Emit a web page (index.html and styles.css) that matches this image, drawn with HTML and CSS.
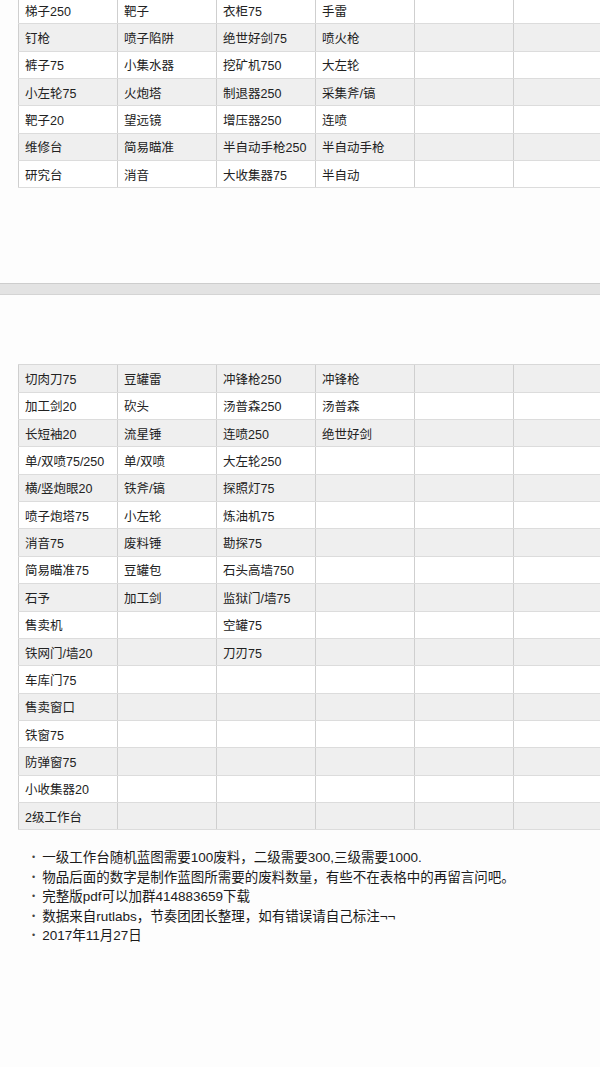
FILE: index.html
```html
<!DOCTYPE html>
<html lang="zh-CN">
<head>
<meta charset="utf-8">
<title>蓝图表</title>
<link rel="stylesheet" href="styles.css">
</head>
<body>
<div class="page">
  <section class="sheet sheet-top">
    <div class="row"><div class="cell">梯子250</div><div class="cell">靶子</div><div class="cell">衣柜75</div><div class="cell">手雷</div><div class="cell"></div><div class="cell"></div></div>
    <div class="row alt"><div class="cell">钉枪</div><div class="cell">喷子陷阱</div><div class="cell">绝世好剑75</div><div class="cell">喷火枪</div><div class="cell"></div><div class="cell"></div></div>
    <div class="row"><div class="cell">裤子75</div><div class="cell">小集水器</div><div class="cell">挖矿机750</div><div class="cell">大左轮</div><div class="cell"></div><div class="cell"></div></div>
    <div class="row alt"><div class="cell">小左轮75</div><div class="cell">火炮塔</div><div class="cell">制退器250</div><div class="cell">采集斧/镐</div><div class="cell"></div><div class="cell"></div></div>
    <div class="row"><div class="cell">靶子20</div><div class="cell">望远镜</div><div class="cell">增压器250</div><div class="cell">连喷</div><div class="cell"></div><div class="cell"></div></div>
    <div class="row alt"><div class="cell">维修台</div><div class="cell">简易瞄准</div><div class="cell">半自动手枪250</div><div class="cell">半自动手枪</div><div class="cell"></div><div class="cell"></div></div>
    <div class="row"><div class="cell">研究台</div><div class="cell">消音</div><div class="cell">大收集器75</div><div class="cell">半自动</div><div class="cell"></div><div class="cell"></div></div>
  </section>

  <div class="divider"></div>

  <section class="sheet sheet-bottom">
    <div class="row alt"><div class="cell">切肉刀75</div><div class="cell">豆罐雷</div><div class="cell">冲锋枪250</div><div class="cell">冲锋枪</div><div class="cell"></div><div class="cell"></div></div>
    <div class="row"><div class="cell">加工剑20</div><div class="cell">砍头</div><div class="cell">汤普森250</div><div class="cell">汤普森</div><div class="cell"></div><div class="cell"></div></div>
    <div class="row alt"><div class="cell">长短袖20</div><div class="cell">流星锤</div><div class="cell">连喷250</div><div class="cell">绝世好剑</div><div class="cell"></div><div class="cell"></div></div>
    <div class="row"><div class="cell">单/双喷75/250</div><div class="cell">单/双喷</div><div class="cell">大左轮250</div><div class="cell"></div><div class="cell"></div><div class="cell"></div></div>
    <div class="row alt"><div class="cell">横/竖炮眼20</div><div class="cell">铁斧/镐</div><div class="cell">探照灯75</div><div class="cell"></div><div class="cell"></div><div class="cell"></div></div>
    <div class="row"><div class="cell">喷子炮塔75</div><div class="cell">小左轮</div><div class="cell">炼油机75</div><div class="cell"></div><div class="cell"></div><div class="cell"></div></div>
    <div class="row alt"><div class="cell">消音75</div><div class="cell">废料锤</div><div class="cell">勘探75</div><div class="cell"></div><div class="cell"></div><div class="cell"></div></div>
    <div class="row"><div class="cell">简易瞄准75</div><div class="cell">豆罐包</div><div class="cell">石头高墙750</div><div class="cell"></div><div class="cell"></div><div class="cell"></div></div>
    <div class="row alt"><div class="cell">石予</div><div class="cell">加工剑</div><div class="cell">监狱门/墙75</div><div class="cell"></div><div class="cell"></div><div class="cell"></div></div>
    <div class="row"><div class="cell">售卖机</div><div class="cell"></div><div class="cell">空罐75</div><div class="cell"></div><div class="cell"></div><div class="cell"></div></div>
    <div class="row alt"><div class="cell">铁网门/墙20</div><div class="cell"></div><div class="cell">刀刃75</div><div class="cell"></div><div class="cell"></div><div class="cell"></div></div>
    <div class="row"><div class="cell">车库门75</div><div class="cell"></div><div class="cell"></div><div class="cell"></div><div class="cell"></div><div class="cell"></div></div>
    <div class="row alt"><div class="cell">售卖窗口</div><div class="cell"></div><div class="cell"></div><div class="cell"></div><div class="cell"></div><div class="cell"></div></div>
    <div class="row"><div class="cell">铁窗75</div><div class="cell"></div><div class="cell"></div><div class="cell"></div><div class="cell"></div><div class="cell"></div></div>
    <div class="row alt"><div class="cell">防弹窗75</div><div class="cell"></div><div class="cell"></div><div class="cell"></div><div class="cell"></div><div class="cell"></div></div>
    <div class="row"><div class="cell">小收集器20</div><div class="cell"></div><div class="cell"></div><div class="cell"></div><div class="cell"></div><div class="cell"></div></div>
    <div class="row alt"><div class="cell">2级工作台</div><div class="cell"></div><div class="cell"></div><div class="cell"></div><div class="cell"></div><div class="cell"></div></div>
  </section>

  <ul class="notes">
    <li>一级工作台随机蓝图需要100废料，二级需要300,三级需要1000.</li>
    <li>物品后面的数字是制作蓝图所需要的废料数量，有些不在表格中的再留言问吧。</li>
    <li>完整版pdf可以加群414883659下载</li>
    <li>数据来自rutlabs，节奏团团长整理，如有错误请自己标注¬¬</li>
    <li>2017年11月27日</li>
  </ul>
</div>
</body>
</html>
```

FILE: styles.css
```css
html, body {
  margin: 0;
  padding: 0;
  background: #fdfdfd;
}

body {
  width: 600px;
  height: 1067px;
  overflow: hidden;
  font-family: "Liberation Sans", "Noto Sans CJK SC", sans-serif;
  color: #222;
  font-size: 12.5px;
}

.page {
  width: 600px;
  overflow: hidden;
  display: flex;
  flex-direction: column;
}

.sheet {
  margin-left: 18px;
  width: 582px;
  overflow: hidden;
  display: flex;
  flex-direction: column;
}

.sheet-top {
  margin-top: -3px;
}

.sheet-bottom {
  margin-top: 69px;
  border-top: 1px solid #d8d8d8;
}

.row {
  display: grid;
  grid-template-columns: repeat(6, 99px);
  height: 27.35px;
  box-sizing: border-box;
  background: #ffffff;
  border-bottom: 1px solid #dcdcdc;
}

.row.alt {
  background: #efefef;
}

.cell {
  display: flex;
  align-items: center;
  padding-left: 6px;
  border-left: 1px solid #cfcfcf;
  white-space: nowrap;
  overflow: hidden;
}

.divider {
  margin-top: 95px;
  height: 12px;
  box-sizing: border-box;
  background: #e3e3e3;
  border-top: 1px solid #cdcdcd;
  border-bottom: 1px solid #d4d4d4;
}

.notes {
  list-style: none;
  margin: 18px 0 0 0;
  padding: 0 0 0 32px;
  line-height: 19.5px;
  font-size: 13.5px;
  color: #1a1a1a;
}

.notes li {
  display: flex;
  gap: 7px;
  white-space: nowrap;
}

.notes li::before {
  content: "•";
  font-size: 9px;
  color: #444;
}
```
